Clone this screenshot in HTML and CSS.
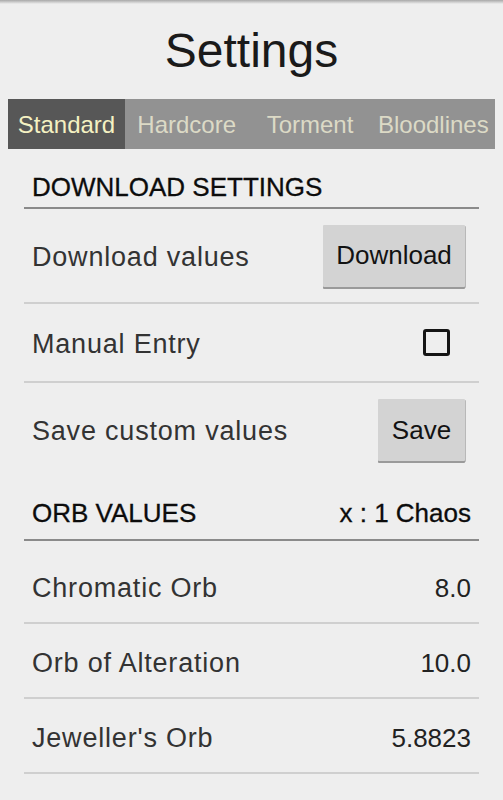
FILE: index.html
```html
<!DOCTYPE html>
<html>
<head>
<meta charset="utf-8">
<link rel="stylesheet" href="styles.css">
</head>
<body>
<div class="topshadow"></div>
<h1 class="title">Settings</h1>
<div class="tabs">
  <div class="tab active">Standard</div>
  <div class="tab">Hardcore</div>
  <div class="tab">Torment</div>
  <div class="tab">Bloodlines</div>
</div>
<div class="content">
  <div class="section-head first">
    <span>DOWNLOAD SETTINGS</span>
  </div>
  <div class="row row-dl">
    <span class="label">Download values</span>
    <button class="btn btn-dl">Download</button>
  </div>
  <div class="row row-manual">
    <span class="label">Manual Entry</span>
    <span class="checkbox"></span>
  </div>
  <div class="row row-save noline">
    <span class="label">Save custom values</span>
    <button class="btn btn-save">Save</button>
  </div>
  <div class="section-head second">
    <span>ORB VALUES</span>
    <span class="ratio">x : 1 Chaos</span>
  </div>
  <div class="orbs">
    <div class="orb"><span class="label">Chromatic Orb</span><span class="value">8.0</span></div>
    <div class="orb"><span class="label">Orb of Alteration</span><span class="value">10.0</span></div>
    <div class="orb"><span class="label">Jeweller's Orb</span><span class="value">5.8823</span></div>
    <div class="orb"><span class="label">Orb of Chance</span><span class="value">9.0</span></div>
  </div>
</div>
</body>
</html>
```
FILE: styles.css
```css
html, body {
  margin: 0;
  padding: 0;
  background: #eeeeee;
  height: 800px;
  overflow: hidden;
  font-family: "Liberation Sans", Arial, sans-serif;
}
.topshadow {
  height: 4px;
  background: linear-gradient(#a8a8a8, #eeeeee);
}
.title {
  margin: 0;
  height: 95px;
  display: flex;
  align-items: center;
  justify-content: center;
  font-size: 48px;
  font-weight: 400;
  color: #1a1a1a;
  padding-bottom: 2px;
  box-sizing: border-box;
}
.tabs {
  margin: 0 8px;
  height: 50px;
  display: grid;
  grid-template-columns: 117px 1fr 1fr 1fr;
  background: #929292;
}
.tab {
  display: flex;
  align-items: center;
  justify-content: center;
  font-size: 24px;
  color: #dcdac6;
  white-space: nowrap;
  padding-top: 2px;
}
.tab.active {
  background: #575757;
  color: #f4f1c2;
}
.content {
  margin: 0 24px;
}
.section-head {
  display: flex;
  justify-content: space-between;
  align-items: center;
  border-bottom: 2px solid #8a8a8a;
  padding: 0 8px;
  font-size: 26px;
  font-weight: 400;
  color: #0c0c0c;
  -webkit-text-stroke: 0.3px #0c0c0c;
  box-sizing: border-box;
}
.section-head.first {
  height: 60px;
  padding-top: 19px;
}
.section-head.second {
  height: 64px;
  padding-top: 10px;
}
.row {
  display: flex;
  justify-content: space-between;
  align-items: center;
  padding: 0 14px 0 8px;
  border-bottom: 2px solid #cfcfcf;
}
.row.noline {
  border-bottom: none;
}
.row-dl { height: 93px; }
.row-manual { height: 77px; padding-right: 29px; }
.row-save { height: 94px; }
.label {
  font-size: 27px;
  color: #333333;
  letter-spacing: 0.8px;
  padding-top: 3px;
}
.btn {
  font-family: "Liberation Sans", Arial, sans-serif;
  font-size: 26px;
  color: #121212;
  background: #d3d3d3;
  border: none;
  border-radius: 1px;
  height: 62px;
  padding: 0;
  box-shadow: 0 2px 0 #9a9a9a, 1px 1px 0 #b8b8b8;
}
.btn-dl { width: 142px; }
.btn-save { width: 87px; }
.checkbox {
  width: 27px;
  height: 27px;
  box-sizing: border-box;
  border: 3px solid #151515;
  border-radius: 3px;
}
.orbs {
  padding-top: 8px;
}
.orb {
  height: 71px;
  display: flex;
  justify-content: space-between;
  align-items: center;
  padding: 2px 8px 0 8px;
  border-bottom: 2px solid #cfcfcf;
}
.value {
  font-size: 26px;
  color: #222;
  padding-top: 3px;
}
```
